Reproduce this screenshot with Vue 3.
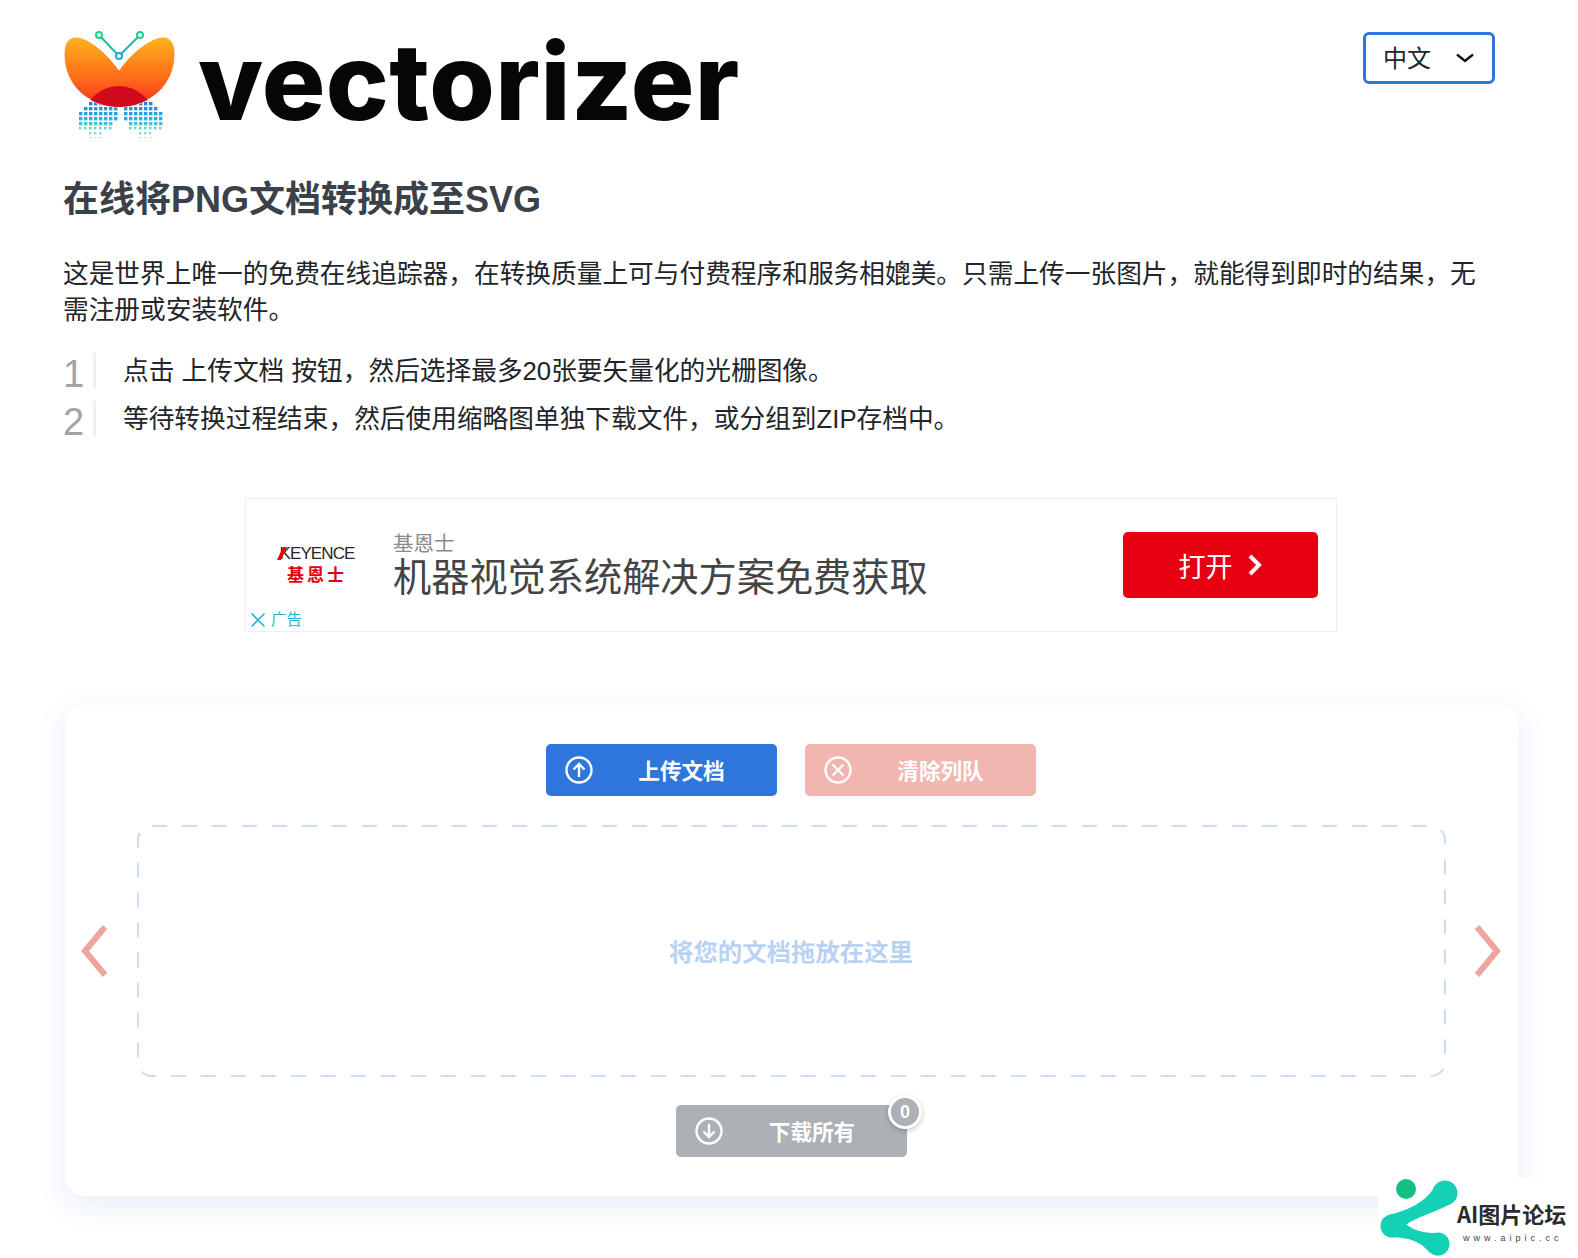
<script setup>
const steps = [
  '点击 上传文档 按钮，然后选择最多20张要矢量化的光栅图像。',
  '等待转换过程结束，然后使用缩略图单独下载文件，或分组到ZIP存档中。'
]

// dot grid under the butterfly: two arches fading from blue to green
const dots = []
for (let row = 0; row < 9; row++) {
  for (let col = 0; col < 17; col++) {
    const x = 79 + col * 5
    const y = 97 + row * 5
    const dist = Math.abs(x - 119)
    const gap = row < 5 ? 3 : row < 7 ? 8 : 16
    if (dist < gap) continue
    if (dist > 41 - Math.max(0, 3 - row) * 4) continue
    if (row > 6 && dist > 32) continue
    dots.push({ x, y, size: row > 5 ? 2.4 : 3.4 })
  }
}
</script>

<template>
  <div class="page">
    <header class="top">
      <div class="brand">
        <svg class="logo" width="112" height="108" viewBox="64 30 112 108">
          <defs>
            <linearGradient id="wing" x1="0" y1="0" x2="0" y2="1">
              <stop offset="0" stop-color="#ffb31f" />
              <stop offset="0.6" stop-color="#ff6a1a" />
              <stop offset="1" stop-color="#f5301c" />
            </linearGradient>
            <linearGradient id="grid" gradientUnits="userSpaceOnUse" x1="0" y1="97" x2="0" y2="138">
              <stop offset="0" stop-color="#1f6fe8" />
              <stop offset="0.55" stop-color="#27b4e0" />
              <stop offset="1" stop-color="#a5f0c4" />
            </linearGradient>
            <clipPath id="wingClip">
              <path d="M119 70C107 53 88 37 76 37C68 37 64 44 64 54C64 85 88 107 119 107C150 107 175 85 175 54C175 44 171 37 163 37C151 37 131 53 119 70Z" />
            </clipPath>
          </defs>
          <rect v-for="(d, i) in dots" :key="i" :x="d.x" :y="d.y" :width="d.size" :height="d.size" fill="url(#grid)" />
          <path d="M119 70C107 53 88 37 76 37C68 37 64 44 64 54C64 85 88 107 119 107C150 107 175 85 175 54C175 44 171 37 163 37C151 37 131 53 119 70Z" fill="url(#wing)" stroke="#fff" stroke-width="1" />
          <circle cx="119" cy="122" r="36" fill="#d00a1c" clip-path="url(#wingClip)" />
          <path d="M99 35L119 56L140 35" fill="none" stroke="#1cbda8" stroke-width="2" />
          <circle cx="99" cy="35" r="3" fill="#fff" stroke="#1fcf8c" stroke-width="2" />
          <circle cx="140" cy="35" r="3" fill="#fff" stroke="#1fcf8c" stroke-width="2" />
          <circle cx="119" cy="56" r="3" fill="#fff" stroke="#16a9d8" stroke-width="2" />
        </svg>
        <span class="wordmark">vectorizer</span>
      </div>
      <div class="lang">
        <select class="lang-select">
          <option>中文</option>
        </select>
        <svg class="lang-arrow" width="20" height="12" viewBox="0 0 20 12">
          <path d="M2 2.5L10 9L18 2.5" fill="none" stroke="#111" stroke-width="2.4" />
        </svg>
      </div>
    </header>

    <h1 class="title">在线将PNG文档转换成至SVG</h1>
    <p class="intro">这是世界上唯一的免费在线追踪器，在转换质量上可与付费程序和服务相媲美。只需上传一张图片，就能得到即时的结果，无需注册或安装软件。</p>

    <ol class="steps">
      <li v-for="(step, i) in steps" :key="i" class="step">
        <span class="step-num">{{ i + 1 }}</span>
        <span class="step-text">{{ step }}</span>
      </li>
    </ol>

    <div class="ad">
      <div class="ad-logo">
        <span class="ad-keyence"><i class="ad-slash"></i>KEYENCE</span>
        <span class="ad-cn">基恩士</span>
      </div>
      <div class="ad-copy">
        <span class="ad-sub">基恩士</span>
        <span class="ad-head">机器视觉系统解决方案免费获取</span>
      </div>
      <button class="ad-btn">
        打开
        <svg width="16" height="24" viewBox="0 0 16 24">
          <path d="M3 3L12 12L3 21" fill="none" stroke="#fff" stroke-width="4" />
        </svg>
      </button>
      <div class="ad-tag">
        <svg width="16" height="16" viewBox="0 0 16 16">
          <path d="M1.5 1.5L14.5 14.5M14.5 1.5L1.5 14.5" stroke="#2db4d6" stroke-width="1.6" />
        </svg>
        广告
      </div>
    </div>

    <section class="card">
      <div class="actions actions-top">
        <button class="btn btn-blue">
          <svg class="btn-icon" width="28" height="28" viewBox="0 0 28 28">
            <circle cx="14" cy="14" r="12.5" fill="none" stroke="#fff" stroke-width="2.4" />
            <path d="M14 21V8M8.5 13.5L14 8L19.5 13.5" fill="none" stroke="#fff" stroke-width="2.4" />
          </svg>
          <span class="btn-label">上传文档</span>
        </button>
        <button class="btn btn-red">
          <svg class="btn-icon" width="28" height="28" viewBox="0 0 28 28">
            <circle cx="14" cy="14" r="12.5" fill="none" stroke="#fff" stroke-width="2.4" />
            <path d="M8.5 8.5L19.5 19.5M19.5 8.5L8.5 19.5" fill="none" stroke="#fff" stroke-width="2.4" />
          </svg>
          <span class="btn-label">清除列队</span>
        </button>
      </div>

      <div class="stage">
        <svg class="nav nav-left" width="28" height="54" viewBox="0 0 28 54">
          <path d="M24 3L4 27L24 51" fill="none" stroke="#eda59d" stroke-width="6" />
        </svg>
        <div class="drop">
          <svg class="drop-line" width="1309" height="252" viewBox="0 0 1309 252">
            <rect x="1" y="1" width="1307" height="250" rx="14" fill="none" stroke="#c9ddf6" stroke-width="2" stroke-dasharray="15 15" />
          </svg>
          <span class="drop-text">将您的文档拖放在这里</span>
        </div>
        <svg class="nav nav-right" width="28" height="54" viewBox="0 0 28 54">
          <path d="M3 3L23 27L3 51" fill="none" stroke="#eda59d" stroke-width="6" />
        </svg>
      </div>

      <div class="actions actions-low">
        <button class="btn btn-grey">
          <svg class="btn-icon" width="28" height="28" viewBox="0 0 28 28">
            <circle cx="14" cy="14" r="12.5" fill="none" stroke="#fff" stroke-width="2.4" />
            <path d="M14 7V20M8.5 14.5L14 20L19.5 14.5" fill="none" stroke="#fff" stroke-width="2.4" />
          </svg>
          <span class="btn-label">下载所有</span>
          <span class="badge">0</span>
        </button>
      </div>
    </section>

    <div class="watermark">
      <svg class="wm-icon" width="82" height="82" viewBox="1378 1178 82 82">
        <circle cx="1406" cy="1189" r="10" fill="#12c080" />
        <g fill="#14d0b4">
          <circle cx="1445" cy="1193" r="12.5" />
          <circle cx="1392" cy="1226" r="11.5" />
          <circle cx="1438" cy="1244" r="11.5" />
          <path d="M1435 1185C1430 1198 1412 1210 1388 1215L1399 1235C1403 1231 1403 1226 1404 1226C1418 1216 1432 1214 1450 1204Z" />
          <path d="M1401 1219C1408 1228 1420 1233 1434 1233L1430 1253C1420 1241 1410 1238 1392 1237Z" />
        </g>
      </svg>
      <div class="wm-text">
        <span class="wm-name">AI图片论坛</span>
        <span class="wm-url">www.aipic.cc</span>
      </div>
    </div>
  </div>
</template>

<style scoped>
.page {
  position: relative;
  width: 1578px;
  height: 1258px;
  overflow: hidden;
  box-sizing: border-box;
  padding: 30px 0 0 63px;
  background: #fff;
  color: #212529;
  font-family: "Liberation Sans", "Noto Sans CJK SC", sans-serif;
}

.top {
  display: flex;
  justify-content: space-between;
  align-items: flex-start;
  padding-right: 83px;
}

.brand {
  display: flex;
  align-items: flex-start;
  height: 106px;
}

.logo {
  display: block;
  flex: none;
  margin-left: 1px;
}

.wordmark {
  margin-left: 22px;
  margin-top: -8px;
  font-family: Inter, sans-serif;
  font-size: 106px;
  line-height: 120px;
  font-weight: 800;
  letter-spacing: 0.4px;
  color: #060606;
}

.lang {
  position: relative;
  margin-top: 2px;
}

.lang-select {
  display: block;
  width: 132px;
  height: 52px;
  box-sizing: border-box;
  padding: 0 0 0 17px;
  border: 3px solid #2f76dc;
  border-radius: 6px;
  background: #fff;
  appearance: none;
  font-family: inherit;
  font-size: 24px;
  color: #212529;
  outline: none;
}

.lang-arrow {
  position: absolute;
  right: 20px;
  top: 20px;
  pointer-events: none;
}

.title {
  margin: 42px 0 0;
  font-size: 36px;
  line-height: 44px;
  font-weight: 700;
  color: #3a4149;
}

.intro {
  margin: 34px 0 0;
  width: 1430px;
  font-size: 25.7px;
  line-height: 36px;
}

.steps {
  margin: 25px 0 0;
  padding: 0;
  list-style: none;
  display: flex;
  flex-direction: column;
  gap: 12px;
}

.step {
  display: flex;
  align-items: center;
  height: 36px;
}

.step-num {
  width: 30px;
  height: 36px;
  margin-right: 27px;
  border-right: 3px solid #eef0f1;
  font-size: 38px;
  line-height: 42px;
  color: #a0a4a9;
  box-sizing: content-box;
}

.step-text {
  font-size: 25.7px;
  line-height: 36px;
}

.ad {
  position: relative;
  display: flex;
  align-items: center;
  box-sizing: border-box;
  width: 1092px;
  height: 134px;
  margin: 61px 0 0 182px;
  padding: 0 18px 0 32px;
  border: 1px solid #eee;
}

.ad-logo {
  display: flex;
  flex-direction: column;
  align-items: center;
  width: 78px;
  margin-top: -2px;
}

.ad-keyence {
  position: relative;
  font-size: 17px;
  line-height: 24px;
  letter-spacing: -0.9px;
  color: #2a2526;
}

.ad-slash {
  position: absolute;
  left: 0;
  top: 5px;
  width: 4px;
  height: 13px;
  background: #e60012;
  transform: skewX(-25deg);
}

.ad-cn {
  font-size: 17px;
  line-height: 20px;
  font-weight: 700;
  letter-spacing: 3px;
  color: #e60012;
}

.ad-copy {
  display: flex;
  flex-direction: column;
  flex: 1;
  margin-left: 37px;
  margin-top: 3px;
}

.ad-sub {
  font-size: 20.5px;
  line-height: 22px;
  color: #8a8a8a;
}

.ad-head {
  font-size: 38.2px;
  line-height: 46px;
  color: #444;
}

.ad-btn {
  display: flex;
  align-items: center;
  justify-content: center;
  gap: 14px;
  width: 195px;
  height: 66px;
  border: 0;
  border-radius: 5px;
  background: #e60012;
  color: #fff;
  font-family: inherit;
  font-size: 27px;
}

.ad-tag {
  position: absolute;
  left: 4px;
  bottom: 1px;
  display: flex;
  align-items: center;
  gap: 5px;
  font-size: 15.5px;
  line-height: 20px;
  color: #2db4d6;
}

.card {
  box-sizing: border-box;
  width: 1453px;
  height: 491px;
  margin: 73px 0 0 2px;
  padding-top: 39px;
  border-radius: 20px;
  background: #fff;
  box-shadow: 0 8px 30px rgba(60, 110, 210, 0.13);
}

.actions {
  display: flex;
  justify-content: center;
  gap: 28px;
}

.actions-top {
  padding-right: 2px;
}

.actions-low {
  margin-top: 28px;
}

.btn {
  position: relative;
  display: flex;
  align-items: center;
  box-sizing: border-box;
  width: 231px;
  height: 52px;
  padding: 0 0 0 19px;
  border: 0;
  border-radius: 5px;
  color: #fff;
  font-family: inherit;
  font-size: 21.6px;
  font-weight: 700;
}

.btn-icon {
  flex: none;
}

.btn-label {
  flex: 1;
  padding-right: 6px;
  padding-bottom: 1px;
  text-align: center;
}

.btn-blue {
  background: #2e76dc;
}

.btn-red {
  background: #f2b6b0;
}

.btn-grey {
  background: #adb0b5;
}

.badge {
  position: absolute;
  right: -15px;
  top: -10px;
  display: flex;
  align-items: center;
  justify-content: center;
  box-sizing: border-box;
  width: 34px;
  height: 34px;
  border: 3px solid #fff;
  border-radius: 50%;
  background: #adb0b5;
  box-shadow: 0 2px 5px rgba(0, 0, 0, 0.22);
  font-size: 18px;
}

.stage {
  display: grid;
  grid-template-columns: 72px 1fr 72px;
  align-items: center;
  margin-top: 29px;
}

.nav {
  display: block;
}

.nav-left {
  margin-left: 16px;
}

.nav-right {
  margin-left: 28px;
}

.drop {
  position: relative;
  display: flex;
  align-items: center;
  justify-content: center;
  height: 252px;
  color: #b9d2f4;
  font-size: 24.4px;
  font-weight: 700;
}

.drop-text {
  margin: -2px 1px 0 0;
}

.drop-line {
  position: absolute;
  left: 0;
  top: 0;
}

.watermark {
  position: absolute;
  right: 0;
  bottom: 0;
  display: flex;
  width: 200px;
  height: 80px;
  background: #fff;
}

.wm-icon {
  flex: none;
  margin-top: 0;
}

.wm-text {
  display: flex;
  flex-direction: column;
  align-items: flex-start;
  margin: 20px 0 0 -3px;
}

.wm-name {
  font-family: "Noto Sans CJK SC", sans-serif;
  font-size: 22px;
  line-height: 30px;
  font-weight: 700;
  color: #2b2b2b;
  white-space: nowrap;
}

.wm-url {
  margin: 4px 0 0 6px;
  font-size: 9px;
  line-height: 12px;
  letter-spacing: 4px;
  color: #444;
  white-space: nowrap;
}
</style>
